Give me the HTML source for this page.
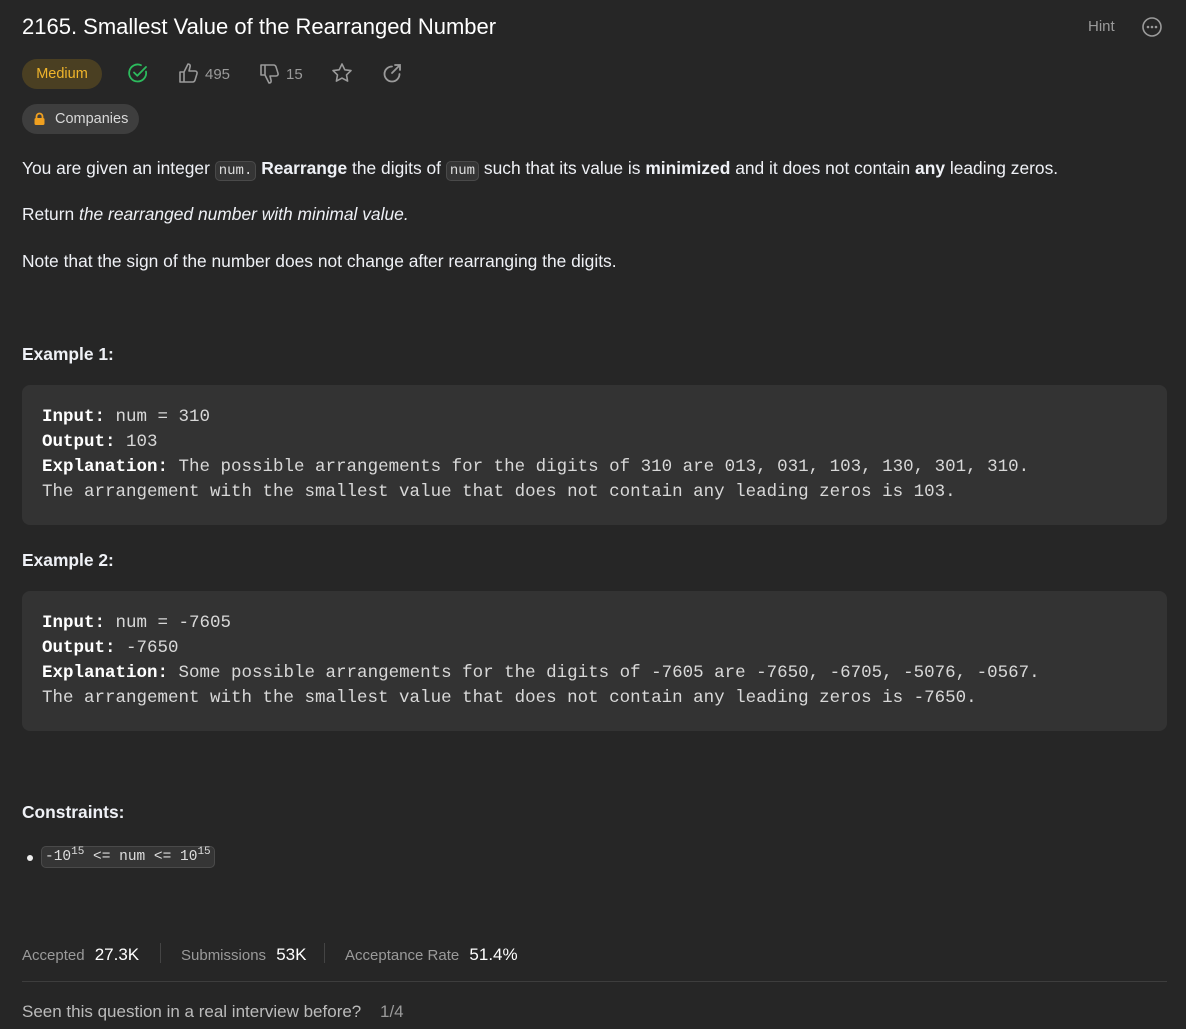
<!DOCTYPE html>
<html><head><meta charset="utf-8"><style>
body{margin:0;background:#262626;color:#eff1f6;font-family:"Liberation Sans",sans-serif;width:1186px;height:1029px;overflow:hidden;position:relative}
.a{position:absolute;white-space:nowrap}
.t{left:22px;top:14px;font-size:22px;color:#fff}
.pill{border-radius:16px;font-size:14.5px}
code{font-family:"Liberation Mono",monospace;font-size:14px;background:#353535;border:1px solid #4a4a4a;border-radius:5px;padding:1px 3px;color:#ddd}
.p{left:22px;font-size:17.4px}
.box{position:absolute;left:22px;width:1145px;background:#333;border-radius:8px;font-family:"Liberation Mono",monospace;font-size:17.5px;line-height:25px;color:#d8d8d8;padding:20px 20px;box-sizing:border-box;white-space:pre}
.box b{color:#fff}
.g{color:#9a9a9a}
</style></head><body>
<div class="a t">2165. Smallest Value of the Rearranged Number</div>
<div class="a g" style="left:1088px;top:18px;font-size:15px">Hint</div>
<svg class="a" style="left:1141px;top:16px" width="22" height="22" viewBox="0 0 22 22"><circle cx="11" cy="11" r="9" fill="none" stroke="#9a9a9a" stroke-width="1.6"/><circle cx="7" cy="11" r="1.3" fill="#9a9a9a"/><circle cx="11" cy="11" r="1.3" fill="#9a9a9a"/><circle cx="15" cy="11" r="1.3" fill="#9a9a9a"/></svg>
<div class="a pill" style="left:22px;top:59px;width:80px;height:30px;background:#4a3f22;color:#f0b52b;line-height:30px;text-align:center">Medium</div>
<svg class="a" style="left:127px;top:62px" width="22" height="22" viewBox="0 0 22 22"><path d="M19 9.5A8.5 8.5 0 1 1 14 3.2" fill="none" stroke="#2cbb5d" stroke-width="1.8" stroke-linecap="round"/><path d="M7 10.5l3.3 3.3L19 5" fill="none" stroke="#2cbb5d" stroke-width="1.8" stroke-linecap="round" stroke-linejoin="round"/></svg>
<svg class="a" style="left:178px;top:62px" width="22" height="22" viewBox="0 0 22 22"><path d="M2 10h4v10H2zM6 10l4-8c2 0 2.5 1.5 2 3l-1 4h6c1.5 0 2.5 1.3 2 2.7l-2 6.5c-.4 1-1.2 1.8-2.3 1.8H6" fill="none" stroke="#9a9a9a" stroke-width="1.6" stroke-linejoin="round"/></svg>
<div class="a g" style="left:205px;top:66px;font-size:15px">495</div>
<svg class="a" style="left:259px;top:63px" width="22" height="22" viewBox="0 0 22 22"><path d="M2 2h4v10H2zM6 12l4 8c2 0 2.5-1.5 2-3l-1-4h6c1.5 0 2.5-1.3 2-2.7l-2-6.5C16.6 2.8 15.8 2 14.7 2H6" fill="none" stroke="#9a9a9a" stroke-width="1.6" stroke-linejoin="round"/></svg>
<div class="a g" style="left:286px;top:66px;font-size:15px">15</div>
<svg class="a" style="left:331px;top:62px" width="22" height="22" viewBox="0 0 22 22"><path d="M11 2l2.8 5.8 6.2.8-4.5 4.3 1.1 6.2L11 16.1 5.4 19.1l1.1-6.2L2 8.6l6.2-.8z" fill="none" stroke="#9a9a9a" stroke-width="1.6" stroke-linejoin="round"/></svg>
<svg class="a" style="left:381px;top:62px" width="22" height="22" viewBox="0 0 22 22"><path d="M18.5 12A7.5 7.5 0 1 1 11 4.5" fill="none" stroke="#9a9a9a" stroke-width="1.8" stroke-linecap="round"/><path d="M11 11l8-8M14 3h5v5" fill="none" stroke="#9a9a9a" stroke-width="1.8" stroke-linecap="round"/></svg>
<div class="a pill" style="left:22px;top:104px;width:117px;height:30px;background:#3e3e3e;color:#d8d8d8;line-height:30px"><svg style="position:absolute;left:11px;top:8px" width="13" height="14" viewBox="0 0 13 14"><path d="M3.5 6V4.5a3 3 0 0 1 6 0V6" fill="none" stroke="#f0a020" stroke-width="1.8"/><rect x="1.5" y="6" width="10" height="7" rx="1.5" fill="#f0a020"/></svg><span style="position:absolute;left:33px">Companies</span></div>
<div class="a p" style="top:158px">You are given an integer <code>num.</code> <b>Rearrange</b> the digits of <code>num</code> such that its value is <b>minimized</b> and it does not contain <b>any</b> leading zeros.</div>
<div class="a p" style="top:204px">Return <i>the rearranged number with minimal value.</i></div>
<div class="a p" style="top:251px">Note that the sign of the number does not change after rearranging the digits.</div>
<div class="a p" style="top:344px;font-weight:bold">Example 1:</div>
<div class="box" style="top:385px;height:140px"><b>Input:</b> num = 310
<b>Output:</b> 103
<b>Explanation:</b> The possible arrangements for the digits of 310 are 013, 031, 103, 130, 301, 310.
The arrangement with the smallest value that does not contain any leading zeros is 103.</div>
<div class="a p" style="top:550px;font-weight:bold">Example 2:</div>
<div class="box" style="top:591px;height:140px"><b>Input:</b> num = -7605
<b>Output:</b> -7650
<b>Explanation:</b> Some possible arrangements for the digits of -7605 are -7650, -6705, -5076, -0567.
The arrangement with the smallest value that does not contain any leading zeros is -7650.</div>
<div class="a p" style="top:802px;font-weight:bold">Constraints:</div>
<div class="a" style="left:27px;top:855px;width:6px;height:6px;border-radius:50%;background:#eee"></div>
<div class="a" style="left:41px;top:846px"><code style="font-size:14.5px;padding:2px 3px">-10<sup style="font-size:11px">15</sup> &lt;= num &lt;= 10<sup style="font-size:11px">15</sup></code></div>
<div class="a g" style="left:22px;top:945px;font-size:15px">Accepted <span style="color:#fff;font-size:17px;margin-left:6px">27.3K</span></div>
<div class="a" style="left:160px;top:943px;width:1px;height:20px;background:#444"></div>
<div class="a g" style="left:181px;top:945px;font-size:15px">Submissions <span style="color:#fff;font-size:17px;margin-left:6px">53K</span></div>
<div class="a" style="left:324px;top:943px;width:1px;height:20px;background:#444"></div>
<div class="a g" style="left:345px;top:945px;font-size:15px">Acceptance Rate <span style="color:#fff;font-size:17px;margin-left:6px">51.4%</span></div>
<div class="a" style="left:22px;top:981px;width:1145px;height:1px;background:#3d3d3d"></div>
<div class="a" style="left:22px;top:1002px;font-size:17px;color:#bbb">Seen this question in a real interview before? <span class="g" style="margin-left:14px">1/4</span></div>
</body></html>
